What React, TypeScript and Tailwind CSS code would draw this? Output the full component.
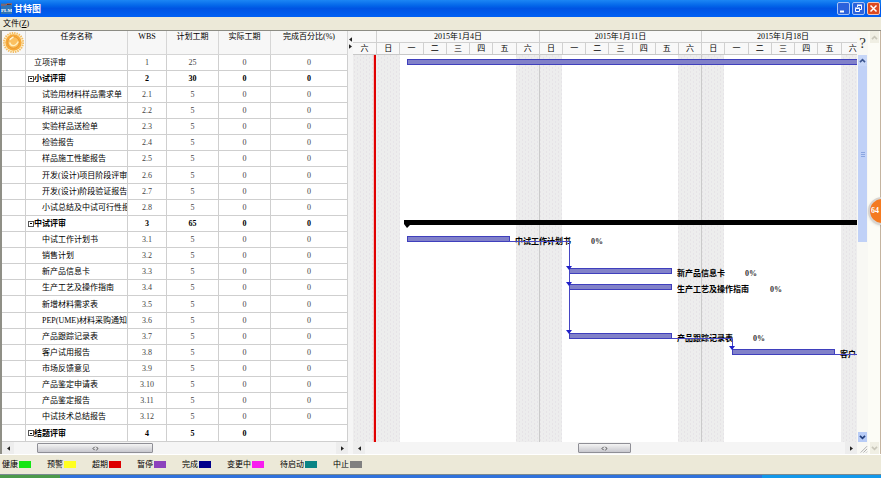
import React from 'react';
import { clsx } from 'clsx';

interface Task {
  name: string;
  wbs: string;
  planned: string;
  actual: string;
  percent: string;
  level: 'root' | 'group' | 'child';
}

const child = (wbs: string, name: string): Task => ({
  name,
  wbs,
  planned: '5',
  actual: '0',
  percent: '0',
  level: 'child',
});

const tasks: Task[] = [
  { name: '立项评审', wbs: '1', planned: '25', actual: '0', percent: '0', level: 'root' },
  { name: '小试评审', wbs: '2', planned: '30', actual: '0', percent: '0', level: 'group' },
  child('2.1', '试验用材料样品需求单'),
  child('2.2', '科研记录纸'),
  child('2.3', '实验样品送检单'),
  child('2.4', '检验报告'),
  child('2.5', '样品施工性能报告'),
  child('2.6', '开发(设计)项目阶段评审报'),
  child('2.7', '开发(设计)阶段验证报告'),
  child('2.8', '小试总结及中试可行性报'),
  { name: '中试评审', wbs: '3', planned: '65', actual: '0', percent: '0', level: 'group' },
  child('3.1', '中试工作计划书'),
  child('3.2', '销售计划'),
  child('3.3', '新产品信息卡'),
  child('3.4', '生产工艺及操作指南'),
  child('3.5', '新增材料需求表'),
  child('3.6', 'PEP(UME)材料采购通知单'),
  child('3.7', '产品跟踪记录表'),
  child('3.8', '客户试用报告'),
  child('3.9', '市场反馈意见'),
  child('3.10', '产品鉴定申请表'),
  child('3.11', '产品鉴定报告'),
  child('3.12', '中试技术总结报告'),
  { name: '结题评审', wbs: '4', planned: '5', actual: '0', percent: '', level: 'group' },
];

const columns = [
  { label: '任务名称', width: 'w-[102px]' },
  { label: 'WBS', width: 'w-[39px]' },
  { label: '计划工期', width: 'w-[52px]' },
  { label: '实际工期', width: 'w-[52px]' },
  { label: '完成百分比(%)', width: 'w-[77px]' },
];

const weeks = [
  { label: '2015年1月4日', width: 'w-[163px]' },
  { label: '2015年1月11日', width: 'w-[162px]' },
  { label: '2015年1月18日', width: 'w-[163px]' },
];

const weekDays = ['日', '一', '二', '三', '四', '五', '六'];

const legend = [
  { label: '健康', color: 'bg-[#14e614]' },
  { label: '预警', color: 'bg-[#ffff20]' },
  { label: '超期', color: 'bg-[#dd0000]' },
  { label: '暂停', color: 'bg-[#8c42bd]' },
  { label: '完成', color: 'bg-[#00008b]' },
  { label: '变更中', color: 'bg-[#f81cf0]' },
  { label: '待启动', color: 'bg-[#0a8484]' },
  { label: '中止', color: 'bg-[#808080]' },
];

const bars = [
  { x: 54, y: 181, label: '中试工作计划书', percentX: 238 },
  { x: 216, y: 213, label: '新产品信息卡', percentX: 392 },
  { x: 216, y: 229, label: '生产工艺及操作指南', percentX: 417 },
  { x: 216, y: 278, label: '产品跟踪记录表', percentX: 400 },
  { x: 379, y: 294, label: '客户', percentX: null },
];

const TaskTable: React.FC = () => (
  <table className="table-fixed w-[346px] border-separate border-spacing-0 bg-white text-[8px] leading-[15px] text-black">
    <thead>
      <tr className="bg-[#f7f7f7]">
        <th className="w-[24px] h-[24px] p-0 border-r border-b border-[#d6d6d6]" aria-label="状态">
          <svg viewBox="0 0 24 24" className="block w-[23px] h-[23px]">
            <circle cx="12" cy="12" r="10" fill="#fdeec4" stroke="#f3bd62" strokeWidth="2" strokeDasharray="1.5 1" />
            <circle cx="12" cy="12" r="8.5" fill="#f6a93a" />
            <circle cx="12" cy="12" r="6" fill="#fbc060" stroke="#e8962a" />
            <path d="M8 12c1 4 6 5 9-1" fill="none" stroke="#fff0c0" strokeWidth="1.5" />
            <path d="M8 9l4-3" stroke="#fff6d8" strokeWidth="1.5" />
          </svg>
        </th>
        {columns.map((column) => (
          <th
            key={column.label}
            className={clsx(column.width, 'p-0 align-top border-r border-b border-[#d6d6d6] font-normal leading-[11px]')}
          >
            {column.label}
          </th>
        ))}
      </tr>
    </thead>
    <tbody>
      {tasks.map((task, index) => {
        const cell = clsx(
          'p-0 border-r border-b border-[#cfcfcf] text-center',
          task.level === 'group' ? 'text-black' : 'text-[#444]',
        );
        return (
          <tr
            key={task.wbs}
            className={clsx(index % 8 === 7 ? 'h-[17px]' : 'h-[16px]', task.level === 'group' && 'font-bold')}
          >
            <td className={cell} />
            <td
              className={clsx(
                'p-0 border-r border-b border-[#cfcfcf] whitespace-nowrap overflow-hidden',
                task.level === 'root' && 'pl-[8px]',
                task.level === 'group' && 'pl-[2px]',
                task.level === 'child' && 'pl-[16px]',
              )}
            >
              {task.level === 'group' ? (
                <span className="flex items-center">
                  <button aria-label="折叠" className="w-[6px] h-[6px] border border-[#555] flex items-center justify-center">
                    <span className="w-[2px] h-px bg-black" />
                  </button>
                  {task.name}
                </span>
              ) : (
                task.name
              )}
            </td>
            <td className={cell}>{task.wbs}</td>
            <td className={cell}>{task.planned}</td>
            <td className={cell}>{task.actual}</td>
            <td className={cell}>{task.percent}</td>
          </tr>
        );
      })}
    </tbody>
  </table>
);

const Arrow: React.FC<{ direction: 'left' | 'right' }> = ({ direction }) => (
  <svg viewBox="0 0 4 6" className="w-[3px] h-[5px]">
    <path d={direction === 'left' ? 'M4 0v6L0 3z' : 'M0 0v6l4-3z'} fill="#222" />
  </svg>
);

const HorizontalScrollbar: React.FC<{ thumb: string }> = ({ thumb }) => (
  <div className="flex h-[12px] bg-[#f5f5f5]">
    <button aria-label="向左滚动" className="w-[12px] flex items-center justify-center bg-[#ededed]">
      <Arrow direction="left" />
    </button>
    <div className="flex-1 py-px">
      <div
        className={clsx(
          thumb,
          'h-[10px] flex items-center justify-center rounded-[1px] border border-[#8f8f96] bg-linear-to-b from-[#f4f4f4] to-[#c8c8ce]',
        )}
      >
        <svg viewBox="0 0 8 6" className="w-[7px] h-[5px]" fill="none" stroke="#333">
          <path d="M3 1L1 3l2 2M5 1l2 2-2 2" />
        </svg>
      </div>
    </div>
    <button aria-label="向右滚动" className="w-[12px] flex items-center justify-center bg-[#ededed]">
      <Arrow direction="right" />
    </button>
  </div>
);

const Timeline: React.FC = () => (
  <div className="flex h-[24px] overflow-hidden bg-[#f8f8f8] text-[8px] text-black">
    <div className="w-[24px] shrink-0 flex flex-col border-r border-[#d0d0d0] text-center">
      <div className="h-[12px] border-b border-[#d0d0d0]" />
      <div className="h-[12px] leading-[11px] border-b border-[#c8c8c8]">六</div>
    </div>
    {weeks.map((week) => (
      <div key={week.label} className={clsx(week.width, 'shrink-0 border-r border-[#d0d0d0] text-center')}>
        <div className="h-[12px] leading-[11px] border-b border-[#d0d0d0]">{week.label}</div>
        <div className="flex h-[12px] leading-[11px] border-b border-[#c8c8c8]">
          {weekDays.map((day) => (
            <div key={day} className="flex-1 border-r border-[#d0d0d0] last:border-r-0">
              {day}
            </div>
          ))}
        </div>
      </div>
    ))}
  </div>
);

const Chart: React.FC = () => (
  <svg className="block w-full h-[387px] bg-white" fontSize="8">
    <defs>
      <pattern id="weekend" width="6" height="4" patternUnits="userSpaceOnUse">
        <rect width="6" height="4" fill="#ededed" />
        <rect x="1" width="1" height="2" fill="#e6e3e6" />
        <rect x="4" y="2" width="1" height="2" fill="#e6e4e8" />
      </pattern>
    </defs>
    {[0, 163, 325, 488].map((x, index) => (
      <rect key={x} x={x} width={index === 0 ? 47 : 46} height="100%" fill="url(#weekend)" />
    ))}
    {[186, 348].map((x) => (
      <rect key={x} x={x} width="1" height="100%" fill="#cacaca" />
    ))}
    <rect x="20" width="3" height="100%" fill="#f5c0c0" />
    <rect x="21" width="2" height="100%" fill="#e00000" />

    {/* project bar and phase summary run past the visible range */}
    <rect x="54.5" y="4.5" width="1000" height="5" fill="#8181c9" stroke="#3f3fbd" />
    <path d="M51 165h1000v5H57l-3 3-3-4z" fill="#000" />

    {bars.map((bar) => (
      <g key={bar.label}>
        <rect x={bar.x + 0.5} y={bar.y + 0.5} width="102" height="5" fill="#8181c9" stroke="#3f3fbd" />
        <text x={bar.x + 108} y={bar.y + 8} fontWeight="bold">
          {bar.label}
        </text>
        {bar.percentX && (
          <text x={bar.percentX} y={bar.y + 8} fontWeight="bold" fill="#333">
            0%
          </text>
        )}
      </g>
    ))}
    <g fill="none" stroke="#4646c4">
      <path d="M156 186.500H216.500V278" />
      <path d="M318 283.500H379.500V294" />
      <path d="M481 299.500H1000" />
    </g>
    <g fill="#1f1fc8">
      <path d="M213 211h6l-3 4z" />
      <path d="M213 227h6l-3 4z" />
      <path d="M213 275h6l-3 4z" />
      <path d="M376 291h6l-3 4z" />
    </g>
  </svg>
);

const Chevron: React.FC<{ up?: boolean; color: string }> = ({ up, color }) => (
  <svg viewBox="0 0 8 6" className="w-[7px] h-[5px]" fill="none" stroke={color} strokeWidth="2">
    <path d={up ? 'M1 5l3-3 3 3' : 'M1 1l3 3 3-3'} />
  </svg>
);

const App: React.FC = () => {
  return (
    <div className="relative flex flex-col min-h-screen overflow-hidden bg-[#ece9d8] font-['Liberation_Serif','Noto_Sans_CJK_SC',serif]">
      <header className="flex items-center h-[17px] px-px bg-linear-to-b from-[#1c86f4] via-[#0054e3] to-[#0060f4] text-white">
        <svg viewBox="0 0 11 11" className="w-[11px] h-[11px]">
          <rect width="11" height="11" fill="#2f74b5" />
          <path d="M0 2h5l1-1h5" stroke="#c65b3a" />
          <text x="0" y="9" fontSize="5" fontWeight="bold" fill="#fff">
            PLM
          </text>
        </svg>
        <h1 className="ml-[2px] flex-1 text-[9px] leading-[16px] font-bold">甘特图</h1>
        <div className="flex gap-[2px]">
          <button aria-label="最小化" className="w-[13px] h-[13px] rounded-[2px] border border-[#a8c4f4] bg-[#2b62dc]">
            <svg viewBox="0 0 11 11" className="w-full h-full">
              <path d="M2 8.500h4" stroke="#fff" strokeWidth="2" />
            </svg>
          </button>
          <button aria-label="还原" className="w-[13px] h-[13px] rounded-[2px] border border-[#a8c4f4] bg-[#2b62dc]">
            <svg viewBox="0 0 11 11" className="w-full h-full" fill="none" stroke="#fff">
              <path d="M4.500 4V2.500h4v4H7M4 2h5M2.500 5.500h4v3h-4zM2 5h5" />
            </svg>
          </button>
          <button aria-label="关闭" className="w-[13px] h-[13px] rounded-[2px] border border-[#f4c8b8] bg-[#dc4a20]">
            <svg viewBox="0 0 11 11" className="w-full h-full">
              <path d="M2.500 2.500l6 6M8.500 2.500l-6 6" stroke="#fff" strokeWidth="1.500" />
            </svg>
          </button>
        </div>
      </header>

      <nav className="flex h-[13px] px-[3px] text-[8px]">
        <button className="leading-[12px] text-black">
          文件(<span className="underline">Z</span>)
        </button>
      </nav>

      <main className="flex flex-1 border-t border-[#8c8c84] bg-[#f5f5f5]">
        <div className="flex flex-col border-l-2 border-[#8f8f86]">
          <TaskTable />
          <HorizontalScrollbar thumb="ml-[23px] w-[116px]" />
        </div>

        <div className="w-[5px] flex flex-col items-center gap-[2px] pt-[6px]">
          <button aria-label="收起左侧" className="flex">
            <Arrow direction="left" />
          </button>
          <button aria-label="收起右侧" className="flex">
            <Arrow direction="right" />
          </button>
        </div>

        <section className="flex flex-col flex-1 min-w-0">
          <Timeline />
          <Chart />
          <HorizontalScrollbar thumb="ml-[213px] w-[53px]" />
        </section>

        <div className="w-[11px] flex flex-col items-center bg-[#f8f8f4]">
          <button className="h-[24px] text-[15px] leading-[20px] text-[#333]" aria-label="帮助">
            ?
          </button>
          <button aria-label="向上滚动" className="w-[9px] h-[11px] flex items-center justify-center bg-[#c6d6f8]">
            <Chevron up color="#3c5690" />
          </button>
          <div className="w-[9px] h-[176px] bg-[#c0d1f7] flex flex-col items-center justify-center gap-px">
            <span className="w-[4px] h-px bg-[#8ba6e0]" />
            <span className="w-[4px] h-px bg-[#8ba6e0]" />
            <span className="w-[4px] h-px bg-[#8ba6e0]" />
          </div>
          <div className="flex-1" />
          <button aria-label="向下滚动" className="w-[9px] h-[10px] flex items-center justify-center bg-[#b8ccf6]">
            <Chevron color="#24407c" />
          </button>
          <svg viewBox="0 0 12 12" className="w-[11px] h-[12px]" stroke="#aaa" fill="none">
            <path d="M4 11l7-7M7 11l4-4M10 11l1-1" />
          </svg>
        </div>

        <div className="w-[13px] flex flex-col items-center justify-between border-r border-[#c4b4a0] bg-[#fcfcf6]">
          <button aria-label="窗口向上滚动" className="w-[9px] h-[12px] flex items-center justify-center bg-[#f0efe4]">
            <Chevron up color="#c9c7ba" />
          </button>
          <button aria-label="窗口向下滚动" className="w-[9px] h-[12px] flex items-center justify-center bg-[#f0efe4]">
            <Chevron color="#c9c7ba" />
          </button>
        </div>
      </main>

      <footer className="flex items-center gap-[16px] h-[20px] pl-[2px] border-t border-white text-[8px] leading-[12px] text-black">
        {legend.map((item) => (
          <div key={item.label} className="flex items-center gap-px">
            <span>{item.label}</span>
            <span className={clsx('w-[12px] h-[7px]', item.color)} />
          </div>
        ))}
      </footer>
      <div className="flex h-[4px] border-t border-[#7a8a90]">
        <span className="w-[60px] bg-[#4b9a4b]" />
        <span className="flex-1 bg-[#2f72dc]" />
        <span className="w-[119px] bg-[#1298ea]" />
      </div>

      {/* floating speed ball, half off screen */}
      <button className="absolute top-[197px] -right-[15px] w-[28px] h-[28px] rounded-full border-2 border-[#d8d4d0] bg-[#f47a20] text-left pl-px text-[8px] font-bold text-white shadow-sm">
        64
      </button>
    </div>
  );
};

export default App;
